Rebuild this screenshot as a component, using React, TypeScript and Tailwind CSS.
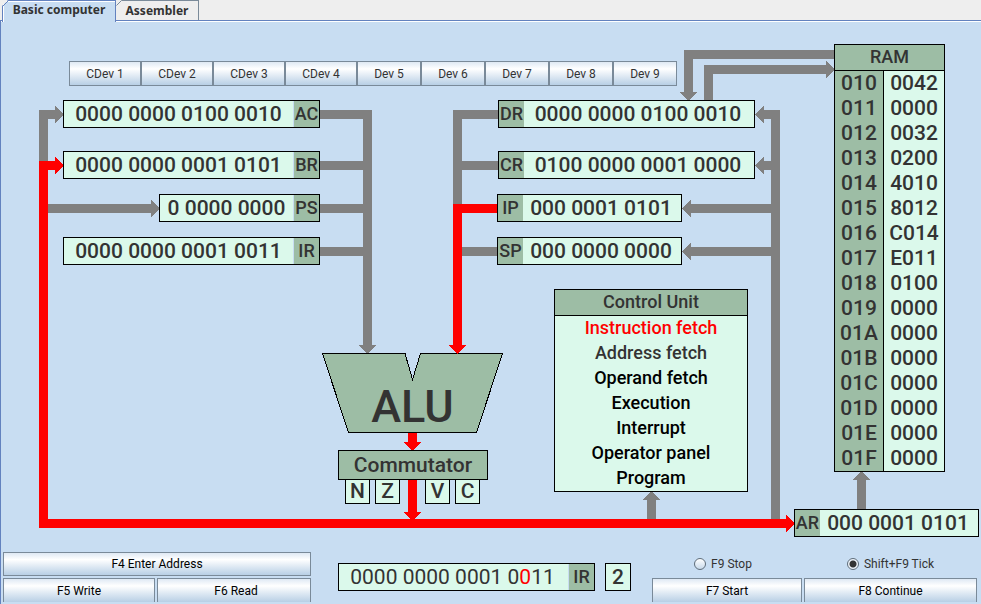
import React from "react";

type Place = string;

const metal =
  "border border-[#7a8a99] bg-linear-to-b from-[#dfe9f4] from-0% via-white via-30% to-[#b8cfe5] text-xs leading-none whitespace-nowrap";

const devices = [
  { name: "CDev 1", width: "w-[72px]" },
  { name: "CDev 2", width: "w-[72px]" },
  { name: "CDev 3", width: "w-[72px]" },
  { name: "CDev 4", width: "w-[72px]" },
  { name: "Dev 5", width: "w-[64px]" },
  { name: "Dev 6", width: "w-[64px]" },
  { name: "Dev 7", width: "w-[64px]" },
  { name: "Dev 8", width: "w-[64px]" },
  { name: "Dev 9", width: "w-[64px]" },
];

const memory = [
  ["010", "0042"],
  ["011", "0000"],
  ["012", "0032"],
  ["013", "0200"],
  ["014", "4010"],
  ["015", "8012"],
  ["016", "C014"],
  ["017", "E011"],
  ["018", "0100"],
  ["019", "0000"],
  ["01A", "0000"],
  ["01B", "0000"],
  ["01C", "0000"],
  ["01D", "0000"],
  ["01E", "0000"],
  ["01F", "0000"],
];

const phases = [
  { name: "Instruction fetch", color: "text-[#ff0000]" },
  { name: "Address fetch", color: "text-[#333333]" },
  { name: "Operand fetch", color: "text-black" },
  { name: "Execution", color: "text-black" },
  { name: "Interrupt", color: "text-black" },
  { name: "Operator panel", color: "text-black" },
  { name: "Program", color: "text-black" },
];

function Register({
  name,
  value,
  place,
  labelFirst = false,
}: {
  name: string;
  value: React.ReactNode;
  place: Place;
  labelFirst?: boolean;
}) {
  const label = (
    <span
      className={`flex shrink-0 items-center justify-center bg-[#9dbda5] pb-px text-lg leading-none ${
        labelFirst ? "w-[25px]" : "w-[26px] border-l border-[#c8ddf2]"
      }`}
    >
      {name}
    </span>
  );
  return (
    <div
      className={`flex h-7 border border-black bg-[#dbf9eb] text-[21px] leading-[26px] font-medium whitespace-nowrap ${place}`}
    >
      {labelFirst && label}
      <span className={`flex-1 text-center ${labelFirst ? "pr-[2px]" : ""}`}>{value}</span>
      {!labelFirst && label}
    </div>
  );
}

function Flag({ name, place }: { name: string; place: Place }) {
  return (
    <div
      className={`absolute top-[457px] h-[25px] w-[25px] border border-black bg-[#dbf9eb] text-center text-[21px] leading-[22px] font-medium ${place}`}
    >
      {name}
    </div>
  );
}

function Buses() {
  return (
    <svg
      className="absolute inset-0"
      width="980"
      height="516"
      viewBox="1 22 980 516"
      shapeRendering="crispEdges"
      aria-hidden="true"
    >
      <g fill="none" stroke="#808080" strokeWidth="9">
        <path d="M43.5 161V114.5H55" />
        <path d="M48 208.5H151" />
        <path d="M320 114.5H367.5V345" />
        <path d="M320 165.5H367M320 208.5H367M320 251.5H367" />
        <path d="M498 114.5H457.5V204" />
        <path d="M457 165.5H498M457 251.5H497" />
        <path d="M764 114.5H775.5V519" />
        <path d="M764 165.5H776M691 208.5H776M691 251.5H776" />
        <path d="M834 54.5H688.5V92" />
        <path d="M708.5 100V69.5H826" />
        <path d="M651.5 519V500" />
        <path d="M861.5 509V480" />
      </g>
      <g fill="#808080">
        <path d="M55 106V123L64 114.5Z" />
        <path d="M151 200V217L160 208.5Z" />
        <path d="M359 345H376L367.5 354Z" />
        <path d="M764 106V123L754.5 114.5Z" />
        <path d="M764 157V174L754.5 165.5Z" />
        <path d="M691 200V217L681.5 208.5Z" />
        <path d="M691 243V260L681.5 251.5Z" />
        <path d="M680 92H697L688.5 101Z" />
        <path d="M826 61V78L835 69.5Z" />
        <path d="M643 500H660L651.5 490.5Z" />
        <path d="M853 480H870L861.5 470.5Z" />
      </g>
      <g fill="none" stroke="#ff0000" strokeWidth="9">
        <path d="M55 165.5H43.5V523.5H786" />
        <path d="M497 208.5H457.5V345" />
        <path d="M412.5 433V442M412.5 480V512" />
      </g>
      <path
        d="M322.5 353.5H405L412.5 379.5L420.5 353.5H502.5L476.5 432.5H348.5Z"
        fill="#9dbda5"
        stroke="#000000"
      />
      <g fill="#ff0000">
        <path d="M55 157V174L64 165.5Z" />
        <path d="M449 345H466L457.5 354Z" />
        <path d="M404 442H421L412.5 451Z" />
        <path d="M404 512H421L412.5 521Z" />
        <path d="M786 515V532L795 523.5Z" />
      </g>
    </svg>
  );
}

function Diagram() {
  return (
    <section aria-label="Processor diagram" className="relative h-[530px] w-[980px] shrink-0">
      <Buses />
      <div className="flex pt-[39px] pl-[68px]">
        {devices.map((d) => (
          <button key={d.name} type="button" className={`h-[25px] text-[#333333] ${metal} ${d.width}`}>
            {d.name}
          </button>
        ))}
      </div>

      <Register name="AC" value="0000 0000 0100 0010" place="absolute left-[62px] top-[78px] w-[257px]" />
      <Register name="BR" value="0000 0000 0001 0101" place="absolute left-[62px] top-[129px] w-[257px]" />
      <Register name="PS" value="0 0000 0000" place="absolute left-[158px] top-[172px] w-[161px]" />
      <Register name="IR" value="0000 0000 0001 0011" place="absolute left-[62px] top-[215px] w-[257px]" />
      <Register labelFirst name="DR" value="0000 0000 0100 0010" place="absolute left-[497px] top-[78px] w-[257px]" />
      <Register labelFirst name="CR" value="0100 0000 0001 0000" place="absolute left-[497px] top-[129px] w-[257px]" />
      <Register labelFirst name="IP" value="000 0001 0101" place="absolute left-[496px] top-[172px] w-[185px]" />
      <Register labelFirst name="SP" value="000 0000 0000" place="absolute left-[496px] top-[215px] w-[185px]" />
      <Register labelFirst name="AR" value="000 0001 0101" place="absolute left-[793px] top-[487px] w-[185px]" />

      <div className="absolute top-[359px] left-[321px] w-[181px] text-center text-[45px] leading-[52px] font-medium">
        ALU
      </div>

      <Flag name="N" place="left-[344px]" />
      <Flag name="Z" place="left-[374px]" />
      <Flag name="V" place="left-[424px]" />
      <Flag name="C" place="left-[454px]" />
      <div className="absolute top-[428px] left-[337px] h-[30px] w-[150px] border border-black bg-[#9dbda5] text-center text-[21px] leading-7 font-medium">
        Commutator
      </div>

      <div className="absolute top-[267px] left-[553px] w-[194px] border border-black bg-[#dbf9eb] text-center text-lg leading-6 font-medium">
        <h2 className="border-b border-black bg-[#9dbda5] pb-px">Control Unit</h2>
        <ul>
          {phases.map((p) => (
            <li key={p.name} className={`pb-px ${p.color}`}>
              {p.name}
            </li>
          ))}
        </ul>
      </div>

      <div className="absolute top-[22px] left-[833px] w-[111px] border border-black bg-[#dbf9eb] text-[21px] leading-[25px] font-medium">
        <table className="w-full table-fixed border-separate border-spacing-0 text-center">
          <caption className="border-b border-black bg-[#9dbda5] pb-px text-lg leading-6">RAM</caption>
          <colgroup>
            <col className="w-[49px]" />
            <col />
          </colgroup>
          <tbody>
            {memory.map(([address, value]) => (
              <tr key={address}>
                <th scope="row" className="border-r border-black bg-[#9dbda5] p-0 font-medium">
                  {address}
                </th>
                <td className="p-0">{value}</td>
              </tr>
            ))}
          </tbody>
        </table>
      </div>
    </section>
  );
}

function Tick({ label, checked = false }: { label: string; checked?: boolean }) {
  return (
    <label className="flex items-center justify-center gap-[5px] text-xs leading-none">
      <input
        type="radio"
        name="clock"
        defaultChecked={checked}
        className="size-3 appearance-none rounded-full border border-[#5f6d7a] bg-linear-to-b from-white to-[#c8d9ea] checked:bg-[radial-gradient(circle,#333333_3px,#eef4fa_4px)]"
      />
      {label}
    </label>
  );
}

function Controls() {
  return (
    <footer className="flex items-start pr-1 pl-[2px]">
      <div className="grid flex-[308] grid-cols-[152px_1fr] gap-[2px] text-black">
        <button type="button" className={`col-span-2 h-6 ${metal}`}>
          F4 Enter Address
        </button>
        <button type="button" className={`h-6 border-b-0 ${metal}`}>
          F5 Write
        </button>
        <button type="button" className={`h-6 border-b-0 pl-1 ${metal}`}>
          F6 Read
        </button>
      </div>

      <div className="mt-[11px] mr-[21px] ml-[27px] flex gap-[10px]">
        <Register
          name="IR"
          value={
            <span className="pr-[2px] font-normal">
              0000 0000 0001 0<span className="text-[#ff0000]">0</span>11
            </span>
          }
          place="w-[257px]"
        />
        <div className="h-7 w-[26px] border border-black bg-[#dbf9eb] text-center text-[21px] leading-[26px] font-medium">
          2
        </div>
      </div>

      <div className="grid flex-[325] grid-cols-[150px_1fr] gap-[2px]">
        <div className="flex h-6 items-center justify-center pr-2">
          <Tick label="F9 Stop" />
        </div>
        <div className="flex h-6 items-center justify-center">
          <Tick label="Shift+F9 Tick" checked />
        </div>
        <button type="button" className={`h-6 border-b-0 text-black ${metal}`}>
          F7 Start
        </button>
        <button type="button" className={`h-6 border-b-0 text-black ${metal}`}>
          F8 Continue
        </button>
      </div>
    </footer>
  );
}

export default function App() {
  return (
    <div className="flex min-h-screen flex-col overflow-hidden bg-[#eeeeee] font-['Roboto','Liberation_Sans',sans-serif] text-[#333333]">
      <div
        role="tablist"
        className="relative z-10 flex h-5 items-start pl-[2px] font-['Noto_Sans',sans-serif] text-xs leading-[18px] font-bold whitespace-nowrap"
      >
        <button
          type="button"
          role="tab"
          aria-selected="true"
          className="relative h-[22px] w-[114px] border-t border-r border-l border-[#6382bf] bg-[#c8ddf2] pb-[3px] shadow-[inset_1px_1px_0_white]"
        >
          Basic computer
          <svg className="absolute -top-px -left-px" width="7" height="7" aria-hidden="true">
            <path d="M0 0H6L0 6Z" fill="#eeeeee" />
            <path d="M0.5 6.5L6.5 0.5" stroke="#6382bf" />
          </svg>
        </button>
        <button
          type="button"
          role="tab"
          aria-selected="false"
          className="relative h-5 w-[83px] border-t border-r border-[#7a8a99] bg-[#eeeeee]"
        >
          Assembler
          <svg className="absolute -top-px left-0" width="7" height="7" aria-hidden="true">
            <path d="M0 0H6L0 6Z" fill="#eeeeee" />
            <path d="M0.5 5.5L5.5 0.5" stroke="#7a8a99" />
          </svg>
        </button>
      </div>
      <main className="flex flex-1 flex-col border-t border-l border-[#6382bf] bg-[#c8ddf2] pt-px shadow-[inset_0_1px_0_white]">
        <Diagram />
        <Controls />
      </main>
    </div>
  );
}
